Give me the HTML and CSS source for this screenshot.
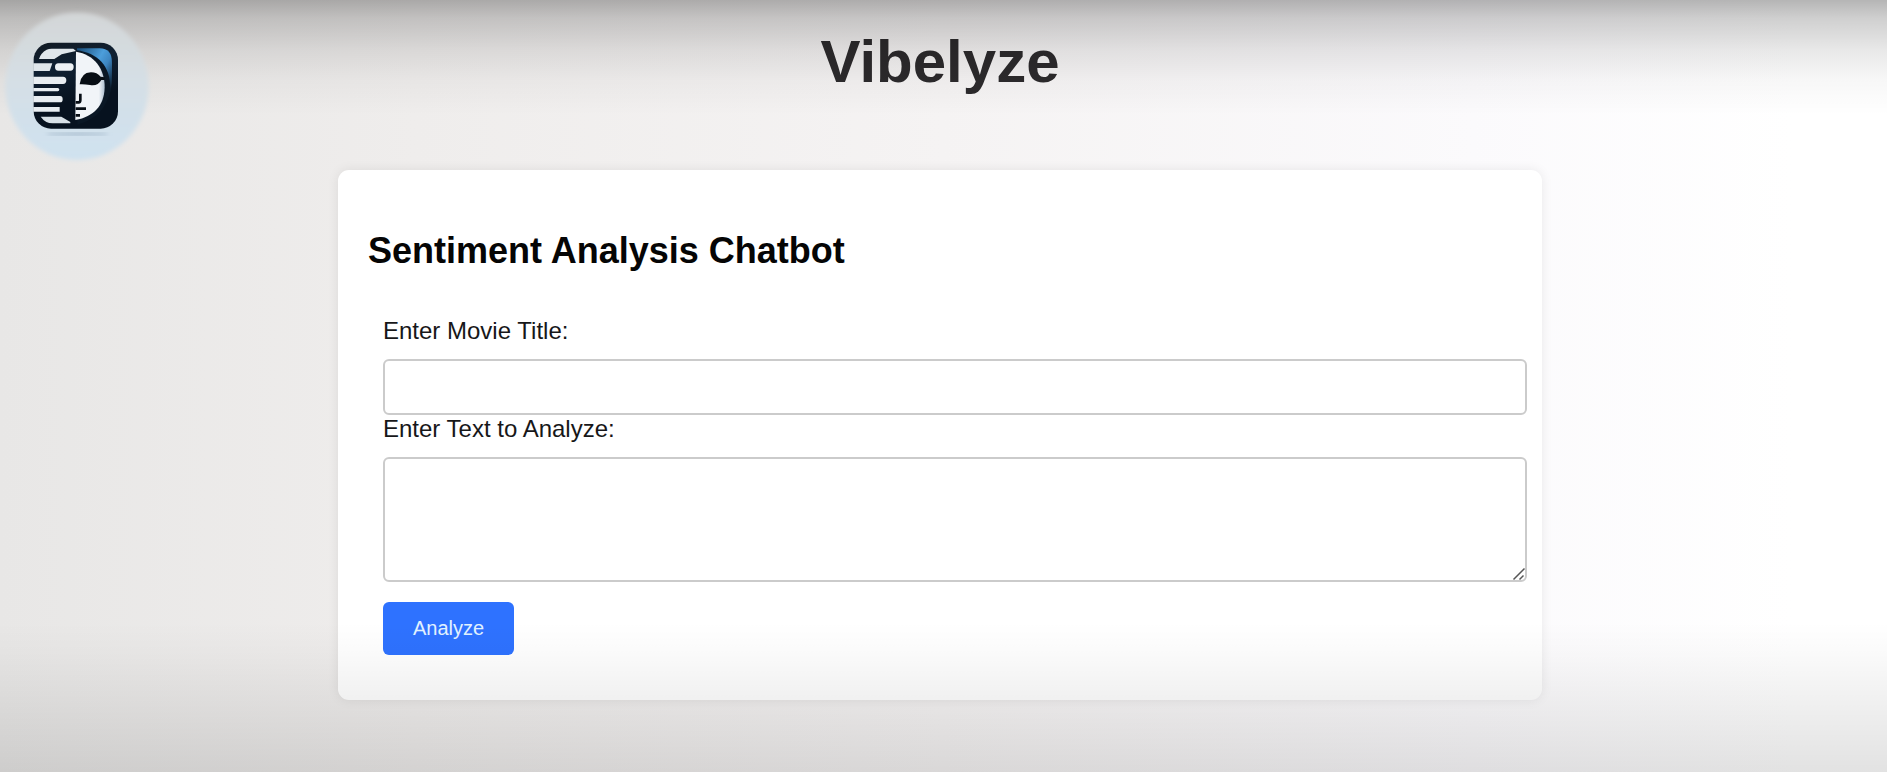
FILE: index.html
```html
<!DOCTYPE html>
<html lang="en">
<head>
<meta charset="utf-8">
<title>Vibelyze</title>
<link rel="stylesheet" href="styles.css">
</head>
<body>
<svg class="logo" viewBox="0 0 510 510" aria-label="Vibelyze logo">
  <defs>
    <linearGradient id="halo" x1="0" y1="0" x2="0" y2="1"><stop offset="0" stop-color="#d3d6d7"/><stop offset=".45" stop-color="#d5dfe5"/><stop offset="1" stop-color="#cfe2f0"/></linearGradient>
    <linearGradient id="tile" x1="0" y1="0" x2=".25" y2="1"><stop offset="0" stop-color="#111a24"/><stop offset=".35" stop-color="#0f2032"/><stop offset=".75" stop-color="#07121f"/></linearGradient>
    <linearGradient id="sky" x1="0" y1="0" x2="1" y2="1"><stop offset="0" stop-color="#174873"/><stop offset=".4" stop-color="#4c9edb"/><stop offset=".55" stop-color="#3d86c2"/><stop offset=".8" stop-color="#0a1928"/></linearGradient>
    <linearGradient id="face" x1="0" y1="0" x2="1" y2="0"><stop offset=".8" stop-color="#f1f4f8"/><stop offset="1" stop-color="#aebfd0"/></linearGradient>
    <filter id="soft"><feGaussianBlur stdDeviation="6"/></filter>
  </defs>
  <ellipse cx="231" cy="259" rx="215" ry="221" fill="url(#halo)" filter="url(#soft)"/>
  <ellipse cx="232" cy="402" rx="94" ry="5" fill="#a9bdce" filter="url(#soft)"/>
  <rect x="101" y="128" width="253" height="258" rx="52" fill="url(#tile)"/>
  <path d="M231 145h68q37 0 37 43v62q-3 45-42 85l-65-20z" fill="url(#sky)"/>
  <path d="M229 151c64 7 103 49 101 111-2 56-42 98-98 112z" fill="#0a1725"/>
  <path d="M228 155c55 8 87 52 86 108-2 54-32 86-88 97z" fill="url(#face)"/>
  <path d="M140 149q6-3 15-3h65l8 7-43 10-22 14h-46q5-18 23-28z" fill="#dfe6eb"/>
  <path d="M100 190h57l-8 23h-49z" fill="#dfe6eb"/>
  <path d="M175 190h36q10 0 10 11t-10 11h-36q-10 0-10-11t10-11z" fill="#edf1f4"/>
  <path d="M100 230h89q10 0 10 11t-10 11h-89zM100 264h73q5 0 5 4.500t-5 5H100zM100 288h80q8 0 8 9.500t-8 9.500h-80zM100 321h79v14h-79z" fill="#e8edf1"/>
  <path d="M122 350h62l27 16v4h-53q-22 0-36-20z" fill="#d8e1e7"/>
  <path d="M239 253q4-35 34-36 18 0 29 13l12 2v8h-10q-10 19-34 15-18-3-31-2z" fill="#080e15"/>
  <path d="M241 281v19q0 7-5 7h-9M227 326h31M227 346h13" fill="none" stroke="#080e15" stroke-width="8"/>
</svg>
<header class="site-header"><h1 class="brand">Vibelyze</h1></header>
<main class="card">
  <h2 class="card-title">Sentiment Analysis Chatbot</h2>
  <form class="form">
    <label class="label" for="movie">Enter Movie Title:</label>
    <input class="field" id="movie" type="text">
    <label class="label label-text" for="text">Enter Text to Analyze:</label>
    <div class="area-wrap">
      <textarea class="field area" id="text"></textarea>
      <svg class="grip" viewBox="0 0 14 14"><path d="M1.500 12.500l11-11M7.500 12.500l4-4" fill="none" stroke="#555" stroke-width="1.500"/></svg>
    </div>
    <button class="button" type="button">Analyze</button>
  </form>
</main>
<div class="shade"></div>
</body>
</html>
```
FILE: styles.css
```css
* { box-sizing: border-box; }
html, body { height: 100%; }
body {
  margin: 0;
  overflow: hidden;
  font-family: "Liberation Sans", Arial, sans-serif;
  background: linear-gradient(90deg, #e8e7e6 0%, #efedec 22%, #f5f3f3 50%, #fbfafc 78%, #fff 95%);
}
.logo { position: absolute; left: 0; top: 0; width: 170px; height: 170px; z-index: 2; }
.site-header { height: 170px; padding-top: 28px; padding-right: 7px; }
.brand {
  margin: 0;
  font-size: 60px;
  line-height: 68px;
  text-align: center;
  color: #2c2a2c;
}
.card {
  width: 1204px;
  height: 530px;
  margin-left: 338px;
  padding: 60px 15px 0 30px;
  background: #fff;
  border-radius: 11px;
  box-shadow: 0 0 12px rgba(0, 0, 0, .08);
}
.card-title { margin: 0; font-size: 36px; line-height: 42px; color: #050505; }
.form { display: flex; flex-direction: column; align-items: flex-start; padding: 44px 0 0 15px; }
.label { height: 43px; font-size: 24px; line-height: 30px; color: #171719; }
.label-text { height: 42px; line-height: 28px; }
.field {
  display: block;
  width: 1144px;
  height: 56px;
  margin: 0;
  border: 2px solid #cbcbcb;
  border-radius: 6px;
  background: #fff;
  outline: 0;
}
.area-wrap { position: relative; }
.area { height: 125px; resize: none; }
.grip { position: absolute; right: 1px; bottom: 1px; width: 14px; height: 14px; }
.button {
  width: 131px;
  height: 53px;
  margin-top: 20px;
  padding: 0 0 1px;
  border: 0;
  border-radius: 6px;
  background: #2e72ff;
  color: #e2f2ff;
  font: 20px "Liberation Sans", Arial, sans-serif;
}
.shade {
  position: absolute;
  inset: 0;
  pointer-events: none;
  background:
    linear-gradient(180deg, rgba(0,0,0,.29) 0, rgba(0,0,0,.19) 18px, rgba(0,0,0,.09) 50px, rgba(0,0,0,.03) 80px, transparent 115px),
    linear-gradient(0deg, rgba(0,0,0,.115) 0, rgba(0,0,0,.06) 70px, rgba(0,0,0,.02) 118px, transparent 150px);
}
```
